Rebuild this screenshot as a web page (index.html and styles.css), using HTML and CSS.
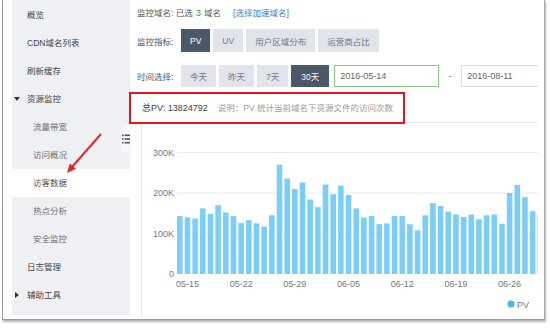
FILE: index.html
```html
<!DOCTYPE html>
<html lang="zh-CN">
<head>
<meta charset="UTF-8">
<title>访客数据</title>
<link rel="stylesheet" href="styles.css">
</head>
<body>

<div class="frame">
    <ul class="sidebar">
        <li class="nav-item">概览</li>
        <li class="nav-item">CDN域名列表</li>
        <li class="nav-item">刷新缓存</li>
        <li class="nav-item group"><span class="caret down"></span>资源监控</li>
        <li class="nav-item sub">流量带宽</li>
        <li class="nav-item sub">访问概况</li>
        <li class="nav-item sub active">访客数据</li>
        <li class="nav-item sub">热点分析</li>
        <li class="nav-item sub">安全监控</li>
        <li class="nav-item">日志管理</li>
        <li class="nav-item group"><span class="caret right"></span>辅助工具</li>
    </ul>

    <div class="main">
        <div class="row row-domain">
            监控域名: 已选 <span class="count">3</span> 域名
            <a class="pick-link">[选择加速域名]</a>
        </div>

        <div class="row row-metric">
            <span class="row-label">监控指标:</span>
            <span class="btn active">PV</span>
            <span class="btn">UV</span>
            <span class="btn">用户区域分布</span>
            <span class="btn">运营商占比</span>
        </div>

        <div class="row row-time">
            <span class="row-label">时间选择:</span>
            <span class="btn">今天</span>
            <span class="btn">昨天</span>
            <span class="btn">7天</span>
            <span class="btn active">30天</span>
            <span class="date-input focus">2016-05-14</span>
            <span class="date-sep">-</span>
            <span class="date-input">2016-08-11</span>
        </div>

        <div class="summary">
            <span class="total">总PV: 13824792</span>
            <span class="note">说明：PV 统计当前域名下资源文件的访问次数</span>
        </div>

        <div class="chart-panel">
            <svg id="chart" class="chart" width="396" height="193"></svg>
        </div>
    </div>

    <!-- overlays -->
    <div class="side-toggle">
        <svg width="8" height="10" viewBox="0 0 8 10">
            <rect x="0" y="0.5" width="1.6" height="1.6" fill="#555"/>
            <rect x="2.6" y="0.5" width="5.4" height="1.6" fill="#555"/>
            <rect x="0" y="4.2" width="1.6" height="1.6" fill="#555"/>
            <rect x="2.6" y="4.2" width="5.4" height="1.6" fill="#555"/>
            <rect x="0" y="7.9" width="1.6" height="1.6" fill="#555"/>
            <rect x="2.6" y="7.9" width="5.4" height="1.6" fill="#555"/>
        </svg>
    </div>
    <div class="mark-box"></div>
    <svg class="mark-arrow" width="50" height="50" viewBox="60 128 50 50">
        <line x1="101" y1="134" x2="72" y2="167" stroke="#e3262b" stroke-width="2"/>
        <polygon points="67,173 76,168.8 69.9,163.4" fill="#e3262b"/>
    </svg>
</div>

<script>
    // daily PV in thousands, starting 05-14
    const data = [143, 140, 137, 162, 148, 170, 152, 143, 126, 133, 125, 117, 145, 270,
        236, 210, 226, 184, 165, 221, 197, 218, 195, 162, 139, 143, 123, 125, 143, 143,
        123, 108, 145, 175, 168, 154, 147, 141, 147, 135, 145, 147, 124, 200, 220, 190,
        155, 150];
    const labels = {1: '05-15', 8: '05-22', 15: '05-29', 22: '06-05', 29: '06-12', 36: '06-19', 43: '06-26'};

    const ns = 'http://www.w3.org/2000/svg';
    const svg = document.getElementById('chart');
    const base = 151;
    const scale = 0.405;
    const left = 35;
    const step = 7.67;
    const barW = 5.6;

    function el(name, attrs, text) {
        const node = document.createElementNS(ns, name);
        for (const key in attrs) {
            node.setAttribute(key, attrs[key]);
        }
        if (text) node.textContent = text;
        svg.appendChild(node);
        return node;
    }

    // grid lines and y labels
    [300, 200, 100, 0].forEach(function(v) {
        const y = base - v * scale;
        if (v > 0) {
            el('line', {x1: left, x2: 400, y1: y, y2: y, class: 'grid'});
        }
        el('text', {x: 32, y: y + 3, class: 'axis', 'text-anchor': 'end'}, v ? v + 'K' : '0');
    });

    // bars
    data.forEach(function(v, i) {
        const h = v * scale;
        el('rect', {x: left + i * step, y: base - h, width: barW, height: h, class: 'bar'});
        if (labels[i]) {
            el('text', {x: left + i * step + barW / 2, y: 164, class: 'axis', 'text-anchor': 'middle'}, labels[i]);
        }
    });

    // legend
    el('circle', {cx: 369, cy: 181, r: 3.6, class: 'legend-dot'});
    el('text', {x: 375, y: 184.5, class: 'axis'}, 'PV');
</script>

</body>
</html>
```

FILE: styles.css
```css
html, body {
    margin: 0;
    padding: 0;
    background: #fff;
}
body {
    width: 550px;
    height: 328px;
    overflow: hidden;
    font-family: "Liberation Sans", "Noto Sans CJK SC", sans-serif;
    font-size: 8.5px;
    color: #555;
}
.frame {
    position: relative;
    display: flex;
    margin-left: 2px;
    width: 543px;
    height: 320px;
    padding-left: 9px;
    box-sizing: border-box;
    border-left: 1px solid #9c9c9c;
    border-right: 1px solid #a8a8a8;
    border-bottom: 1px solid #9a9a9a;
    box-shadow: 1px 2px 2px rgba(0, 0, 0, 0.3);
    background: #fff;
}

/* sidebar */
.sidebar {
    list-style: none;
    margin: 0;
    padding: 1px 0 0;
    width: 118px;
    height: 315px;
    box-sizing: border-box;
    background: #eef0f4;
    flex-shrink: 0;
}
.nav-item {
    height: 28px;
    line-height: 28px;
    padding-left: 15px;
    color: #444;
    white-space: nowrap;
}
.nav-item.group {
    padding-left: 2px;
}
.nav-item.sub {
    padding-left: 21px;
    color: #6e6e6e;
}
.nav-item.active {
    background: #fff;
    color: #505050;
}
.caret {
    display: inline-block;
    width: 13px;
    vertical-align: middle;
    position: relative;
    height: 6px;
}
.caret.down::before {
    content: "";
    position: absolute;
    left: 0;
    top: 0;
    border-left: 3px solid transparent;
    border-right: 3px solid transparent;
    border-top: 4px solid #333;
}
.caret.right::before {
    content: "";
    position: absolute;
    left: 1px;
    top: -1px;
    border-top: 3px solid transparent;
    border-bottom: 3px solid transparent;
    border-left: 4px solid #333;
}

/* main area */
.main {
    width: 408px;
    height: 320px;
    padding-left: 7px;
    box-sizing: border-box;
    overflow: hidden;
    flex-shrink: 0;
}
.row {
    display: flex;
    align-items: center;
    white-space: nowrap;
}
.row > * {
    flex-shrink: 0;
}
.row-domain {
    height: 24px;
    color: #555;
}
.count {
    color: #2ea52e;
    font-size: 9.5px;
    margin: 0 3px;
}
.pick-link {
    color: #3a7cc9;
    margin-left: 12px;
}
.row-metric {
    margin-top: 5px;
    height: 23px;
}
.row-time {
    margin-top: 13px;
    height: 22px;
}
.row-label {
    width: 44px;
    color: #555;
}
.btn {
    height: 100%;
    display: flex;
    align-items: center;
    padding: 0 9px;
    margin-right: 3px;
    background: #e1e4ea;
    color: #727782;
}
.btn.active {
    background: #4b586a;
    color: #fff;
}
.row-time .btn.active {
    padding: 0 10px;
    margin-right: 5px;
}
.date-input {
    height: 100%;
    box-sizing: border-box;
    width: 105px;
    display: flex;
    align-items: center;
    padding-left: 5px;
    border: 1px solid #dcdcdc;
    color: #666;
    font-size: 9px;
}
.date-input.focus {
    border-color: #86c97f;
}
.date-sep {
    width: 22px;
    text-align: center;
    color: #666;
}

.summary {
    margin-top: 5px;
    height: 30px;
    display: flex;
    align-items: center;
    padding-left: 5px;
    white-space: nowrap;
}
.total {
    color: #444;
    font-size: 9px;
    margin-right: 10px;
}
.note {
    color: #9a9a9a;
}

.chart-panel {
    margin-left: 4px;
    height: 194px;
    border-top: 1px solid #e6e6e6;
    border-left: 1px solid #e6e6e6;
}
.chart {
    display: block;
}
.chart .grid {
    stroke: #ececec;
    stroke-width: 1;
}
.chart .axis {
    font-family: "Liberation Sans", sans-serif;
    font-size: 9px;
    fill: #777;
}
.chart .bar {
    fill: #7ccefa;
}
.chart .legend-dot {
    fill: #4fb8f5;
}

/* overlays */
.side-toggle {
    position: absolute;
    left: 118px;
    top: 123px;
    width: 10px;
    height: 32px;
    background: #f6f7f9;
    clip-path: polygon(0 4px, 100% 0, 100% 100%, 0 calc(100% - 4px));
    display: flex;
    align-items: center;
    justify-content: center;
}
.mark-box {
    position: absolute;
    left: 126px;
    top: 92px;
    width: 276px;
    height: 32px;
    box-sizing: border-box;
    border: 2px solid #e3141b;
}
.mark-arrow {
    position: absolute;
    left: 57px;
    top: 128px;
}
```
